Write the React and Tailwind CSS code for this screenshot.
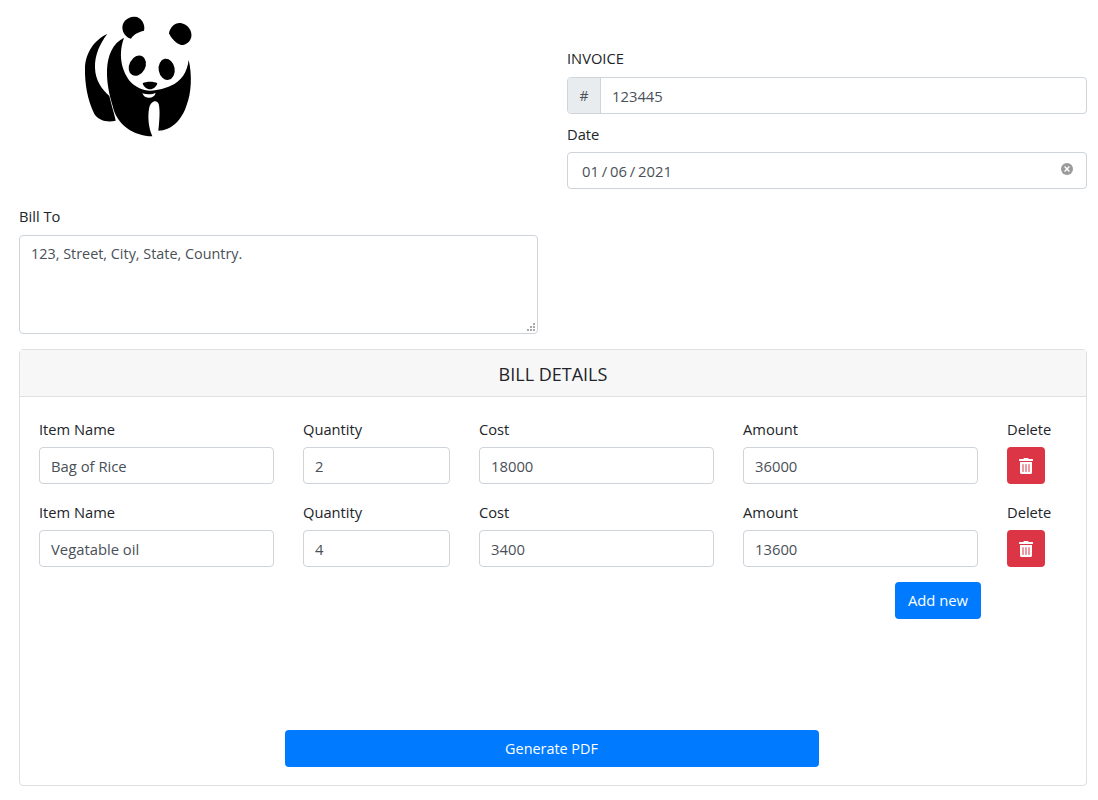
import { FaTrashAlt } from 'react-icons/fa';

const inputClass =
  'block h-[37px] w-full rounded-[4px] border border-[#ced4da] bg-white px-[11px] text-[14.8px] text-[#495057] outline-none';
const labelClass = 'block h-6 text-[14.7px] leading-6 text-[#212529]';

const Panda = () => (
  <svg viewBox="0 0 480 450" className="h-[150px] w-[160px]">
    <path
      fill="#000"
      d="M142 102C105 118 76 158 75 205C74 250 82 300 103 342C116 362 142 368 167 362C164 345 156 322 148 288C124 266 106 240 105 203C104 165 120 130 142 102Z"
    />
    <path
      fill="#000"
      d="M192 113C158 130 143 165 141 210C140 250 148 285 158 318C170 374 220 408 277 409C266 385 262 350 268 322C272 304 290 296 296 312C301 330 298 365 295 392C334 392 366 360 380 315C394 280 397 225 386 180C382 215 364 245 332 257C315 265 298 270 270 272C248 272 228 262 212 246C192 222 170 175 192 113Z"
    />
    <path fill="#fff" d="M247 280C260 284 275 284 287 279C284 290 275 294 265 293C256 293 250 288 247 280Z" />
    <path
      fill="#000"
      d="M188 90C183 68 200 51 222 50C245 49 257 75 252 92C235 96 222 102 213 116C202 114 191 104 188 90Z"
    />
    <path
      fill="#000"
      d="M327 100C329 82 345 67 362 69C383 72 397 92 394 110C391 126 376 136 363 135C350 132 334 116 327 100Z"
    />
    <ellipse cx="232" cy="197" rx="24" ry="32" transform="rotate(28 232 197)" fill="#000" />
    <ellipse cx="320" cy="208" rx="24" ry="32" transform="rotate(-10 320 208)" fill="#000" />
    <path fill="#000" d="M248 250C258 244 282 244 292 250C290 260 280 268 270 268C260 268 250 260 248 250Z" />
  </svg>
);

const Field = ({ label, value, width }) => (
  <div className={width}>
    <label className={labelClass + ' mb-[6px]'}>{label}</label>
    <input className={inputClass} defaultValue={value} />
  </div>
);

const ItemRow = ({ name, quantity, cost, amount }) => (
  <div className="flex gap-[29px]">
    <Field label="Item Name" value={name} width="w-[235px]" />
    <Field label="Quantity" value={quantity} width="w-[147px]" />
    <Field label="Cost" value={cost} width="w-[235px]" />
    <Field label="Amount" value={amount} width="w-[235px]" />
    <div>
      <label className={labelClass + ' mb-[6px]'}>Delete</label>
      <button className="flex h-[37px] w-[38px] items-center justify-center rounded-[4px] bg-[#dc3545] text-white">
        <FaTrashAlt className="text-[16px]" />
      </button>
    </div>
  </div>
);

const App = () => {
  return (
    <div
      className="pl-[19px] pr-[11px] text-[#212529]"
      style={{ fontFamily: '"Open Sans", "Noto Sans", sans-serif' }}
    >
      <div className="flex gap-[29px]">
        <div className="w-[519px]">
          <div className="pl-[41px]">
            <Panda />
          </div>
        </div>
        <div className="w-[520px] pt-[46px]">
          <label className={labelClass + ' mb-[7px]'}>INVOICE</label>
          <div className="flex h-[37px] rounded-[4px] border border-[#ced4da]">
            <span className="flex w-[33px] shrink-0 items-center justify-center rounded-l-[3px] border-r border-[#ced4da] bg-[#e9ecef] text-[14px] text-[#495057]">
              #
            </span>
            <input
              className="w-full px-[11px] pt-[1px] text-[14.8px] text-[#495057] outline-none"
              defaultValue="123445"
            />
          </div>
          <label className={labelClass + ' mb-[6px] mt-[8px]'}>Date</label>
          <div className="relative">
            <input
              className={inputClass + ' pl-[14px] [word-spacing:-1px]'}
              defaultValue="01 / 06 / 2021"
            />
            <span className="absolute right-[14px] top-[11px] flex h-[12px] w-[12px] items-center justify-center rounded-full bg-[#9a9a9a] text-white">
              <svg viewBox="0 0 10 10" className="h-2 w-2">
                <path d="M2 2L8 8M8 2L2 8" stroke="#fff" strokeWidth="1.8" />
              </svg>
            </span>
          </div>
        </div>
      </div>

      <div className="mt-[15px] w-[519px]">
        <label className={labelClass + ' mb-[7px]'}>Bill To</label>
        <div className="relative">
          <textarea
            className="block h-[99px] w-full resize-none rounded-[4px] border border-[#ced4da] px-[11px] py-[6px] text-[14.4px] leading-6 text-[#495057] outline-none"
            defaultValue="123, Street, City, State, Country."
          />
          <svg viewBox="0 0 9 9" className="absolute bottom-[2px] right-[3px] h-[9px] w-[9px]">
            <path
              fill="#a8a8a8"
              d="M7 0h2v2H7zM4 3h2v2H4zM7 3h2v2H7zM1 6h2v2H1zM4 6h2v2H4zM7 6h2v2H7z"
            />
          </svg>
        </div>
      </div>

      <div className="mt-[15px] h-[437px] w-[1068px] rounded-[4px] border border-[#dfdfdf]">
        <div className="flex h-[47px] items-center justify-center border-b border-[#dfdfdf] bg-[#f7f7f7] pt-[3px] text-[18px]">
          BILL DETAILS
        </div>
        <div className="px-[19px] pt-5">
          <div className="flex flex-col gap-[16px]">
            <ItemRow name="Bag of Rice" quantity="2" cost="18000" amount="36000" />
            <ItemRow name="Vegatable oil" quantity="4" cost="3400" amount="13600" />
          </div>
          <div className="mt-[15px] flex justify-end pr-[86px]">
            <button className="h-[37px] w-[86px] rounded-[4px] bg-[#007bff] text-[14.8px] text-white">Add new</button>
          </div>
          <div className="mt-[111px] flex justify-center pr-[3px]">
            <button className="h-[37px] w-[534px] rounded-[4px] bg-[#007bff] text-[14.4px] text-white">
              Generate PDF
            </button>
          </div>
        </div>
      </div>
    </div>
  );
};

export default App;
